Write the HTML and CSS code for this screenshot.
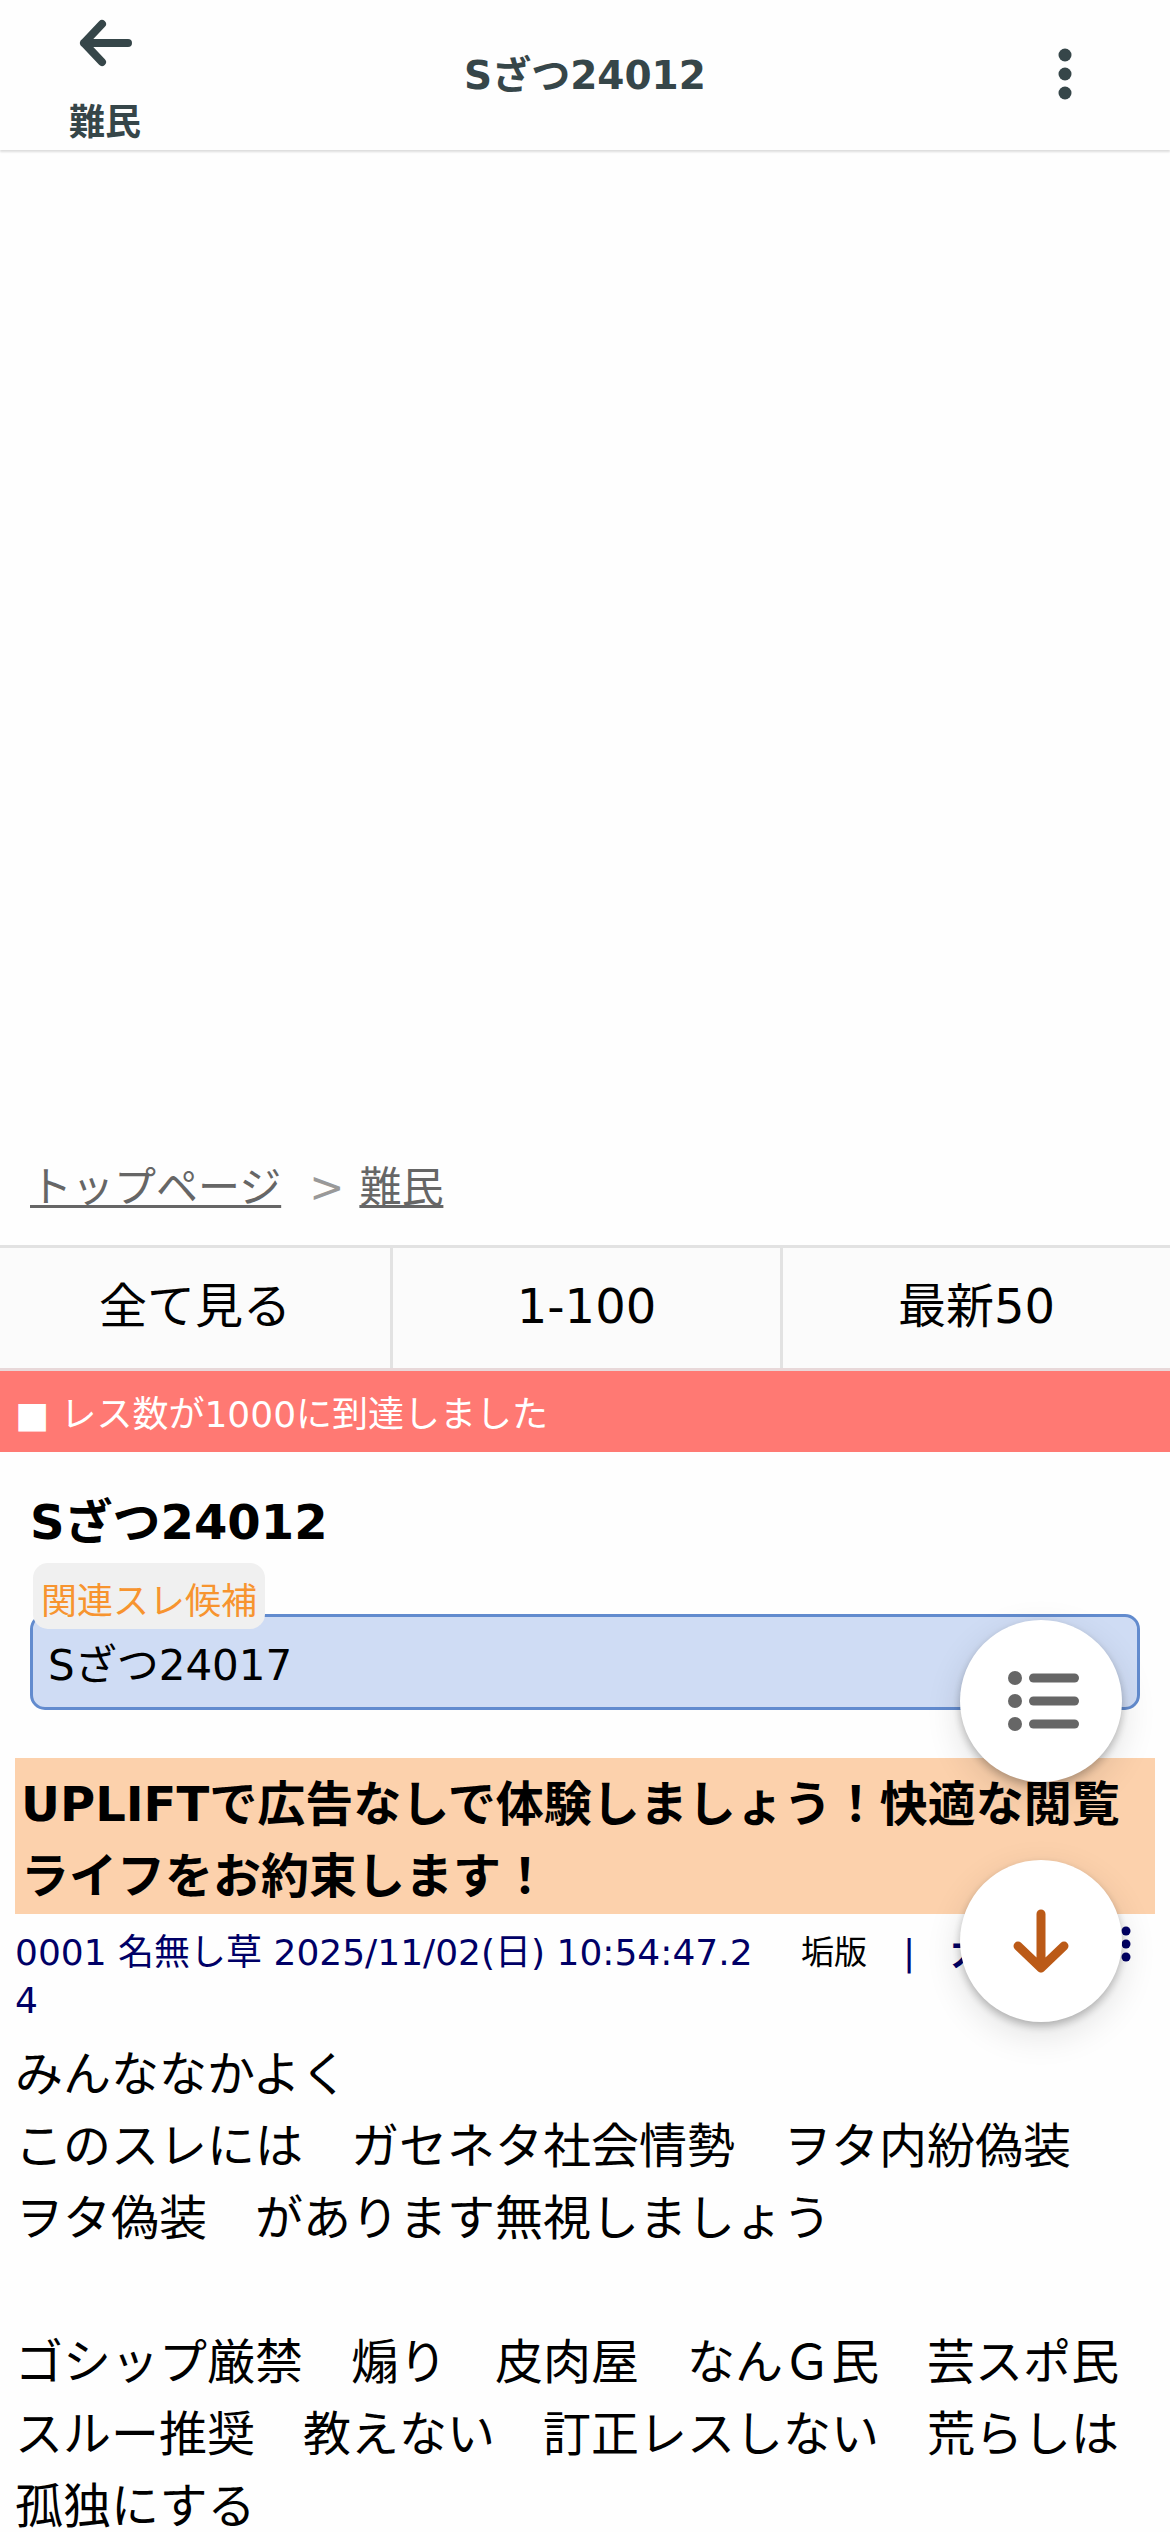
FILE: index.html
```html
<!DOCTYPE html>
<html lang="ja">
<head>
<meta charset="utf-8">
<meta name="viewport" content="width=device-width, initial-scale=1">
<title>Sざつ24012</title>
<link rel="stylesheet" href="styles.css">
</head>
<body>
<header class="topbar">
  <a class="back" href="#">
    <svg class="back-icon" viewBox="0 0 54 48" aria-hidden="true"><path d="M50 24H6M24 5L6 24L24 43"/></svg>
    <span>難民</span>
  </a>
  <p class="topbar-title">Sざつ24012</p>
  <button class="menu" type="button" aria-label="メニュー">
    <svg class="menu-icon" viewBox="0 0 14 54" aria-hidden="true"><circle cx="7" cy="7" r="6.5"/><circle cx="7" cy="26" r="6.5"/><circle cx="7" cy="45" r="6.5"/></svg>
  </button>
</header>
<main>
  <div class="ad-slot"></div>
  <nav class="crumbs"><a href="#">トップページ</a><span class="crumb-sep">&gt;</span><a href="#">難民</a></nav>
  <nav class="pager">
    <a href="#">全て見る</a>
    <a href="#">1-100</a>
    <a href="#">最新50</a>
  </nav>
  <p class="notice">■ レス数が1000に到達しました</p>
  <section class="thread-head">
    <h1 class="thread-title">Sざつ24012</h1>
    <span class="related-label">関連スレ候補</span>
    <a class="related" href="#">Sざつ24017</a>
  </section>
  <a class="promo" href="#">UPLIFTで広告なしで体験しましょう！快適な閲覧ライフをお約束します！</a>
  <article class="post">
    <div class="post-meta">
      <span class="post-name">0001 名無し草 2025/11/02(日) 10:54:47.24</span>
      <div class="post-actions">
        <a class="post-link" href="#">垢版</a>
        <span>|</span>
        <a class="post-size" href="#">大</a>
        <button class="post-menu" type="button" aria-label="レスのメニュー">
          <svg class="post-menu-icon" viewBox="0 0 10 36" aria-hidden="true"><circle cx="5" cy="5" r="4.5"/><circle cx="5" cy="18" r="4.5"/><circle cx="5" cy="31" r="4.5"/></svg>
        </button>
      </div>
    </div>
    <p class="post-body">みんななかよく<br>このスレには　ガセネタ社会情勢　ヲタ内紛偽装　ヲタ偽装　があります無視しましょう<br><br>ゴシップ厳禁　煽り　皮肉屋　なんＧ民　芸スポ民<br>スルー推奨　教えない　訂正レスしない　荒らしは孤独にする</p>
  </article>
</main>
<div class="fabs">
  <button class="fab" type="button" aria-label="一覧">
    <svg class="fab-list" viewBox="0 0 72 60" aria-hidden="true"><circle cx="8" cy="7" r="7"/><circle cx="8" cy="30" r="7"/><circle cx="8" cy="53" r="7"/><rect x="22" y="2.5" width="50" height="9" rx="4.5"/><rect x="22" y="25.5" width="50" height="9" rx="4.5"/><rect x="22" y="48.5" width="50" height="9" rx="4.5"/></svg>
  </button>
  <button class="fab" type="button" aria-label="下へ">
    <svg class="fab-down" viewBox="0 0 56 64" aria-hidden="true"><path d="M28 5V59M5 37L28 59L51 37"/></svg>
  </button>
</div>
</body>
</html>
```
FILE: styles.css
```css
* { box-sizing: border-box; }

body {
  margin: 0;
  background: #fefefe;
  color: #000;
  font-family: "DejaVu Sans", "Noto Sans CJK JP", sans-serif;
  font-size: 48px;
  line-height: 72px;
}

p, h1 { margin: 0; }

a { color: inherit; text-decoration: none; }

button {
  display: flex;
  align-items: center;
  justify-content: center;
  margin: 0;
  padding: 0;
  border: 0;
  background: none;
}

/* Top bar */
.topbar {
  display: grid;
  grid-template-columns: 210px 1fr 210px;
  align-items: center;
  height: 150px;
  box-shadow: 0 2px 2px #ddd;
  color: #364649;
  font-weight: bold;
}

.back {
  display: flex;
  flex-direction: column;
  align-items: center;
  gap: 32px;
  padding-top: 16px;
  font-size: 36px;
  line-height: 48px;
}

.back-icon {
  width: 54px;
  height: 48px;
  fill: none;
  stroke: currentColor;
  stroke-width: 8;
  stroke-linecap: round;
  stroke-linejoin: round;
}

.topbar-title {
  padding-top: 2px;
  font-size: 39px;
  line-height: 48px;
  text-align: center;
}

.menu { color: inherit; }
.menu-icon { width: 14px; height: 54px; fill: currentColor; }

.ad-slot { min-height: 1008px; }

.crumbs {
  display: flex;
  padding: 0 30px 27px;
  color: #999;
  font-size: 42px;
  line-height: 60px;
}

.crumbs a {
  color: #666;
  text-decoration: underline;
  text-decoration-thickness: 3px;
  text-underline-offset: 3px;
  text-decoration-skip-ink: none;
}

.crumb-sep { padding: 0 15px 0 28px; }

.pager {
  display: grid;
  grid-template-columns: repeat(3, 1fr);
  border-top: 3px solid #e2e2e2;
  border-bottom: 3px solid #e8d8d9;
  background: #fbfbfb;
  text-align: center;
}

.pager a { padding: 22px 0 26px; }
.pager a + a { border-left: 3px solid #e2e2e2; }

.notice {
  padding: 20px 15px 13px;
  background: #ff7973;
  color: #fff;
  font-size: 36px;
  line-height: 48px;
}

.thread-head { padding: 34px 30px 48px; }

.thread-title {
  margin-bottom: 5px;
  font-size: 48px;
  line-height: 72px;
}

.related-label {
  position: relative;
  display: block;
  width: fit-content;
  margin: 0 3px -15px;
  padding: 15px 8px 3px;
  border-radius: 15px;
  background: #f0f0f0;
  color: #f7942f;
  font-size: 36px;
  line-height: 48px;
}

.related {
  display: block;
  padding: 19px 15px 11px;
  border: 3px solid #628bce;
  border-radius: 15px;
  background: #cfdcf4;
  font-size: 42px;
  line-height: 60px;
}

.promo {
  display: block;
  margin: 0 15px;
  padding: 10px 6px 2px;
  background: #fcd1ac;
  font-weight: bold;
}

/* Posts */
.post { padding: 15px 15px 0; }

.post-meta {
  display: flex;
  align-items: flex-start;
  gap: 36px;
  margin-bottom: 13px;
  color: #000066;
  font-size: 36px;
  line-height: 48px;
}

.post-name { flex: 1; word-break: break-all; }

.post-actions {
  display: flex;
  gap: 36px;
  width: 354px;
  padding-right: 24px;
}

.post-link { color: #000; font-size: 33px; }
.post-size { font-weight: bold; }
.post-menu { height: 30px; margin-left: auto; color: #000066; }
.post-menu-icon { width: 10px; height: 36px; fill: currentColor; }

/* Floating buttons */
.fabs {
  position: fixed;
  right: 48px;
  bottom: 510px;
  display: grid;
  gap: 78px;
}

.fab {
  width: 162px;
  height: 162px;
  border-radius: 50%;
  background: #fff;
  box-shadow: 0 4px 8px rgba(0, 0, 0, .25), 0 12px 36px rgba(0, 0, 0, .12);
}

.fab-list { width: 72px; height: 60px; margin-left: 4px; fill: #666; }

.fab-down {
  width: 56px;
  height: 64px;
  fill: none;
  stroke: #bb5a17;
  stroke-width: 9;
  stroke-linecap: round;
  stroke-linejoin: round;
}
```
